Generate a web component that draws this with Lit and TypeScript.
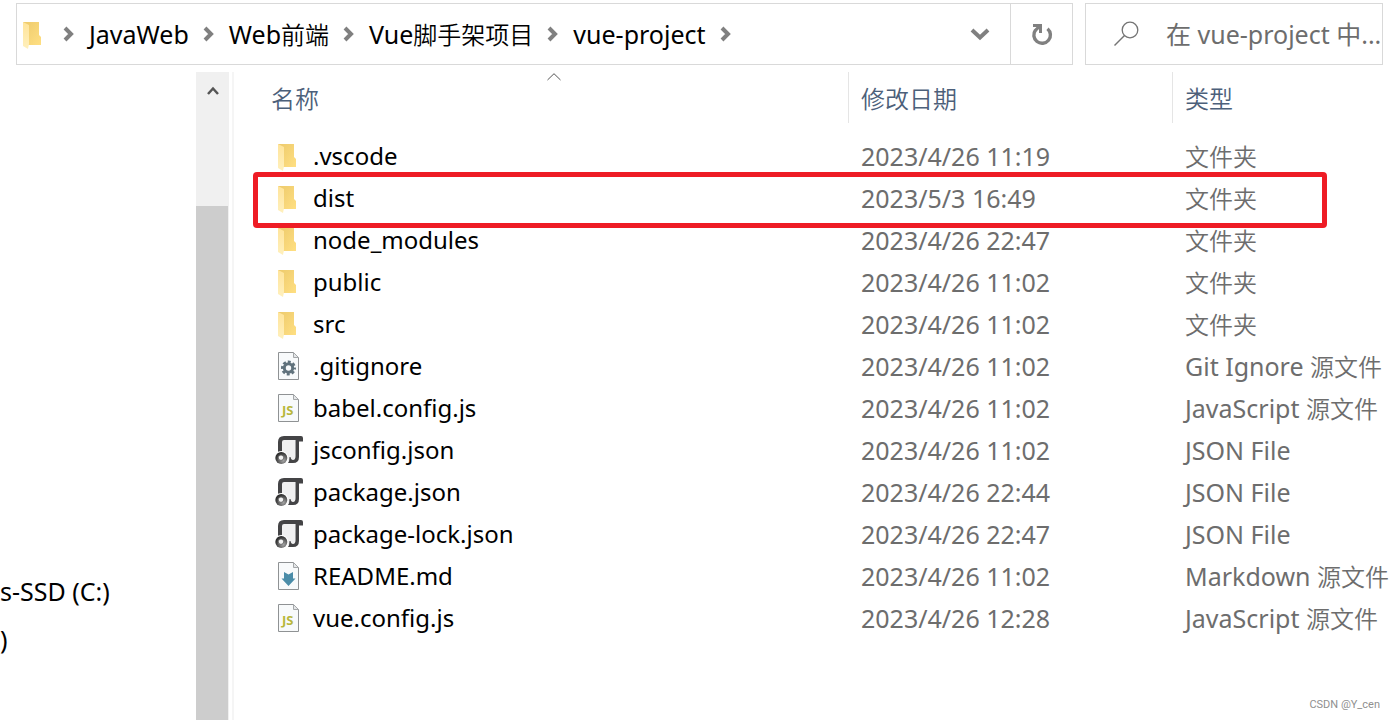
import { LitElement, html, svg, css } from "lit";
import { customElement, property } from "lit/decorators.js";

type Kind = "folder" | "gear" | "js" | "json" | "md";
interface Entry {
  name: string;
  date: string;
  kind: Kind;
  latin?: string;
  han?: string;
  marked?: boolean;
}

const entries: Entry[] = [
  { name: ".vscode", date: "2023/4/26 11:19", kind: "folder", han: "文件夹" },
  { name: "dist", date: "2023/5/3 16:49", kind: "folder", han: "文件夹", marked: true },
  { name: "node_modules", date: "2023/4/26 22:47", kind: "folder", han: "文件夹" },
  { name: "public", date: "2023/4/26 11:02", kind: "folder", han: "文件夹" },
  { name: "src", date: "2023/4/26 11:02", kind: "folder", han: "文件夹" },
  { name: ".gitignore", date: "2023/4/26 11:02", kind: "gear", latin: "Git Ignore ", han: "源文件" },
  { name: "babel.config.js", date: "2023/4/26 11:02", kind: "js", latin: "JavaScript ", han: "源文件" },
  { name: "jsconfig.json", date: "2023/4/26 11:02", kind: "json", latin: "JSON File" },
  { name: "package.json", date: "2023/4/26 22:44", kind: "json", latin: "JSON File" },
  { name: "package-lock.json", date: "2023/4/26 22:47", kind: "json", latin: "JSON File" },
  { name: "README.md", date: "2023/4/26 11:02", kind: "md", latin: "Markdown ", han: "源文件" },
  { name: "vue.config.js", date: "2023/4/26 12:28", kind: "js", latin: "JavaScript ", han: "源文件" },
];

const crumbs = [
  { latin: "JavaWeb", han: "" },
  { latin: "Web", han: "前端" },
  { latin: "Vue", han: "脚手架项目" },
  { latin: "vue-project", han: "" },
];

const sheet = svg`
  <path d="M4.5 1.5H19.5L24.5 6.5V28.5H4.5Z" fill="#f8fafb" stroke="#8f9294"/>
  <path d="M19.5 1.5V6.5H24.5Z" fill="#e4e6e8" stroke="#a4a7a9"/>`;

@customElement("file-icon")
class FileIcon extends LitElement {
  @property() kind: Kind = "folder";

  static styles = css`
    :host { display: block; width: 30px; height: 30px; flex: none; }
    svg { display: block; }
    .glyph { font: 700 13px "Open Sans", sans-serif; fill: #b7b73b; }
  `;

  private art() {
    switch (this.kind) {
      case "folder":
        return svg`
          <defs><linearGradient id="back" x1="0" y1="0" x2="1" y2="1">
            <stop offset="0" stop-color="#edca6c"/><stop offset="1" stop-color="#ffdf82"/>
          </linearGradient>
          <linearGradient id="front" x1="0" y1="0" x2="0" y2="1">
            <stop offset="0" stop-color="#ffe49a"/><stop offset="1" stop-color="#fff0bd"/>
          </linearGradient></defs>
          <path d="M4 3H20V16L22 18V26H9Z" fill="url(#back)"/>
          <path d="M4 3L10 6V25L9 30L4 27Z" fill="url(#front)"/>`;
      case "gear":
        return svg`${sheet}
          <circle cx="14.5" cy="17" r="4.200" fill="none" stroke="#60727c" stroke-width="3"/>
          <circle cx="14.5" cy="17" r="6.200" fill="none" stroke="#60727c" stroke-width="2.600" stroke-dasharray="2.900 1.970" stroke-dashoffset="1.450"/>`;
      case "js":
        return svg`${sheet}<text class="glyph" x="8" y="22">JS</text>`;
      case "md":
        return svg`${sheet}<path d="M10 11L14.500 13.500L19 11V17.500H21.500L14.500 25L7.500 17.500H10Z" fill="#4a8ca8"/>`;
      case "json":
        return svg`
          <defs><radialGradient id="bead" cx=".65" cy=".7" r=".7">
            <stop offset="0" stop-color="#a8a8a8"/><stop offset=".5" stop-color="#666"/><stop offset="1" stop-color="#262626"/>
          </radialGradient></defs>
          <path d="M7 5H21V26H7Z" fill="#f0f0f1"/>
          <path d="M4 17V7Q4 1 10 1H27Q29 1 29 3V6.500H22V5H10Q8 5 8 7V17Z" fill="#444446"/>
          <path d="M21.500 5H25V22Q25 28 19 28H14Q15.500 26 15.500 22H16.500Q17 25 19 25Q21.500 25 21.500 21Z" fill="#444446"/>
          <circle cx="7.300" cy="23" r="7" fill="#fff"/>
          <circle cx="7.300" cy="23" r="6" fill="url(#bead)"/>
          <circle cx="7" cy="22.700" r="2.700" fill="#f3f3f3" stroke="#555" stroke-width=".8"/>`;
    }
  }

  render() {
    return html`<svg width="30" height="30" viewBox="0 0 30 30" aria-hidden="true">${this.art()}</svg>`;
  }
}

@customElement("app-root")
class AppRoot extends LitElement {
  static styles = css`
    :host {
      display: flex;
      flex-direction: column;
      position: relative;
      height: 100vh;
      overflow: hidden;
      background: #fff;
      color: #000;
      font: 25px/40px "Noto Sans", "Noto Sans CJK SC", sans-serif;
    }
    .han { font-size: 24px; font-family: "Noto Sans CJK SC", sans-serif; font-weight: 350; line-height: 1; }
    button { padding: 0; border: 0; background: none; font: inherit; color: inherit; display: grid; place-items: center; }
    svg { display: block; }
    .top { display: flex; gap: 12px; padding: 3px 12px 7px 16px; }
    .address, .search { box-sizing: border-box; height: 62px; border: 1px solid #d9d9d9; display: flex; align-items: center; }
    .address { flex: 1; min-width: 0; padding-left: 2px; }
    .trail { display: flex; align-items: center; flex: 1; min-width: 0; margin: 0; padding: 0; list-style: none; white-space: nowrap; }
    .trail li { display: flex; align-items: center; }
    .trail a { color: inherit; text-decoration: none; }
    .step { width: 40px; height: 60px; }
    .drop { width: 60px; height: 60px; }
    .refresh { width: 62px; height: 60px; border-left: 1px solid #d9d9d9; }
    .search { width: 298px; padding-left: 28px; gap: 27px; }
    .search svg { flex: none; }
    .search input { flex: 1; min-width: 0; padding: 0; border: 0; outline: 0; background: none; font: inherit; color: #6d6d6d; }
    .search input::placeholder { color: #6d6d6d; opacity: 1; }
    .body { flex: 1; min-height: 0; display: grid; grid-template-columns: 196px 33px 1fr; }
    .tree { margin: 0; padding: 495px 0 0; list-style: none; white-space: nowrap; }
    .tree li { line-height: 48px; }
    .scroll { background: #f0f0f0; display: flex; flex-direction: column; }
    .up { height: 38px; width: 33px; }
    .thumb { flex: 1; margin: 96px 1px 0 0; background: #cdcdcd; }
    .list { margin-left: 3px; border-left: 2px solid #f5f5f5; min-width: 0; }
    table { width: 100%; table-layout: fixed; border-collapse: separate; border-spacing: 0; }
    .date-col { width: 324px; }
    .type-col { width: 223px; }
    th { position: relative; height: 51px; padding: 0 0 0 12px; text-align: left; font-weight: 400; color: #4c607a; border-left: 1px solid #e5e5e5; }
    th:first-child { padding-left: 36px; border-left-color: transparent; }
    .sort { position: absolute; top: 1px; left: 50%; margin-left: 5px; }
    .spacer td { height: 12px; padding: 0; }
    td { height: 42px; padding: 0 0 0 13px; color: #6d6d6d; white-space: nowrap; line-height: 40px; }
    .name { padding-left: 40px; color: #000; font-size: 24px; }
    .file { display: flex; align-items: center; gap: 9px; }
    .marked { position: relative; }
    .marked .name::after {
      content: "";
      position: absolute;
      inset: -5px 68px -9px 19px;
      border: 5px solid #ee1c25;
      border-radius: 4px;
      pointer-events: none;
    }
    .credit { position: absolute; right: 15px; bottom: 8px; font: 11px/14px Roboto, sans-serif; color: #8f8f8f; }
  `;

  private step() {
    return html`<button class="step" aria-label="展开">
      <svg width="12" height="16" viewBox="0 0 12 16"><path d="M2 2L8 8L2 14" fill="none" stroke="#808080" stroke-width="4"/></svg>
    </button>`;
  }

  render() {
    return html`
      <header class="top">
        <nav class="address">
          <file-icon kind="folder"></file-icon>
          <ol class="trail">
            <li>${this.step()}</li>
            ${crumbs.map((c) => html`<li><a href="#">${c.latin}${c.han ? html`<span class="han">${c.han}</span>` : ""}</a>${this.step()}</li>`)}
          </ol>
          <button class="drop" aria-label="以前的位置">
            <svg width="20" height="14" viewBox="0 0 20 14"><path d="M2 3L10 10.500L18 3" fill="none" stroke="#808080" stroke-width="4"/></svg>
          </button>
          <button class="refresh" aria-label="刷新">
            <svg width="22" height="24" viewBox="0 0 22 24">
              <path d="M4.500 8A8.300 8.300 0 1 0 16.500 6.700" fill="none" stroke="#808080" stroke-width="3.400"/>
              <path d="M2 2H11V11H8V7L5.500 9.500L3 7.500L5.500 5H2Z" fill="#808080"/>
            </svg>
          </button>
        </nav>
        <label class="search">
          <svg width="25" height="26" viewBox="0 0 25 26" aria-hidden="true">
            <circle cx="16" cy="9" r="7.800" fill="none" stroke="#747474" stroke-width="1.300"/>
            <path d="M10.500 14.500L0.500 24.500" stroke="#747474" stroke-width="1.500"/>
          </svg>
          <input type="text" aria-label="搜索" placeholder="在 vue-project 中..." />
        </label>
      </header>
      <main class="body">
        <ul class="tree">
          <li>s-SSD (C:)</li>
          <li>)</li>
        </ul>
        <div class="scroll">
          <button class="up" aria-label="向上滚动">
            <svg width="12" height="10" viewBox="0 0 12 10"><path d="M1 8L6 2.500L11 8" fill="none" stroke="#555" stroke-width="2.500"/></svg>
          </button>
          <div class="thumb"></div>
        </div>
        <section class="list">
          <table>
            <colgroup><col /><col class="date-col" /><col class="type-col" /></colgroup>
            <thead>
              <tr>
                <th scope="col">
                  <span class="han">名称</span>
                  <svg class="sort" width="14" height="8" viewBox="0 0 14 8"><path d="M0.500 7L7 0.700L13.500 7" fill="none" stroke="#555"/></svg>
                </th>
                <th scope="col"><span class="han">修改日期</span></th>
                <th scope="col"><span class="han">类型</span></th>
              </tr>
            </thead>
            <tbody>
              <tr class="spacer"><td colspan="3"></td></tr>
              ${entries.map(
                (e) => html`<tr class=${e.marked ? "marked" : ""}>
                  <td class="name"><span class="file"><file-icon .kind=${e.kind}></file-icon>${e.name}</span></td>
                  <td>${e.date}</td>
                  <td>${e.latin ?? ""}${e.han ? html`<span class="han">${e.han}</span>` : ""}</td>
                </tr>`
              )}
            </tbody>
          </table>
        </section>
      </main>
      <small class="credit">CSDN @Y_cen</small>
    `;
  }
}
